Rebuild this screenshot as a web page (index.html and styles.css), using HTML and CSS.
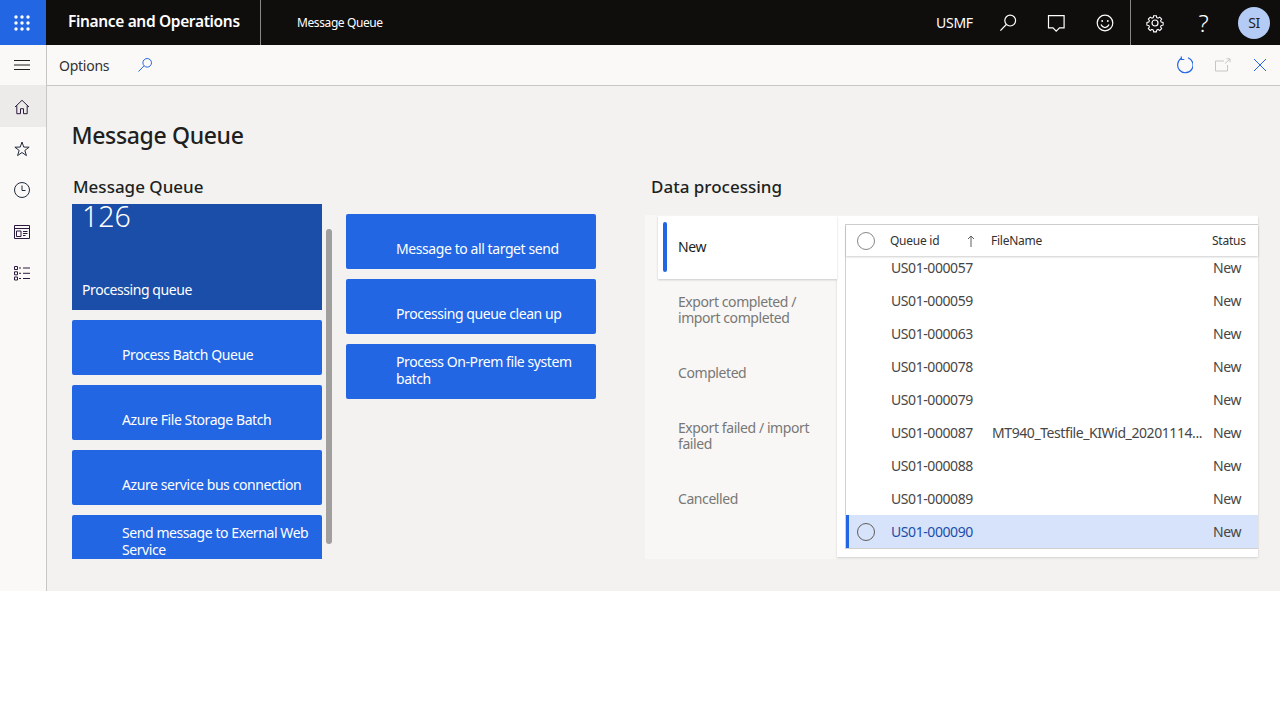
FILE: index.html
```html
<!DOCTYPE html>
<html lang="en">
<head>
<meta charset="utf-8">
<title>Message Queue</title>
<link rel="stylesheet" href="styles.css">
</head>
<body>
<div class="app">
  <header class="topbar">
    <div class="waffle">
      <svg width="16" height="16" viewBox="0 0 16 16" fill="#fff"><circle cx="2" cy="2" r="1.7"/><circle cx="8" cy="2" r="1.7"/><circle cx="14" cy="2" r="1.7"/><circle cx="2" cy="8" r="1.7"/><circle cx="8" cy="8" r="1.7"/><circle cx="14" cy="8" r="1.7"/><circle cx="2" cy="14" r="1.7"/><circle cx="8" cy="14" r="1.7"/><circle cx="14" cy="14" r="1.7"/></svg>
    </div>
    <div class="brand">Finance and Operations</div>
    <div class="crumb">Message Queue</div>
    <div class="company">USMF</div>
    <div class="topicon">
      <svg width="20" height="20" viewBox="-1 0 20 20" fill="none" stroke="#fff" stroke-width="1.2"><circle cx="12.2" cy="7.6" r="5.4"/><path d="M8.3 11.5 2.4 17.6"/></svg>
    </div>
    <div class="topicon">
      <svg width="20" height="20" viewBox="0 0 20 20" fill="none" stroke="#fff" stroke-width="1.2"><path d="M2.5 2.6h15.6v12.3h-4.6l-3.3 3.2-3.2-3.2H2.5z"/></svg>
    </div>
    <div class="topicon">
      <svg width="20" height="20" viewBox="0 0 20 20" fill="none" stroke="#fff" stroke-width="1.2"><circle cx="10" cy="10" r="7.8"/><circle cx="7.2" cy="8" r=".9" fill="#fff" stroke="none"/><circle cx="12.8" cy="8" r=".9" fill="#fff" stroke="none"/><path d="M6 11.6c1 2 2.4 3 4 3s3-1 4-3"/></svg>
    </div>
    <div class="topicon divided">
      <svg width="20" height="20" viewBox="0 0 20 20" fill="none" stroke="#fff" stroke-width="1.2"><path d="M8.5 1.9h3l.4 2.1 1.5.7 1.9-1.2 2.1 2.1-1.2 1.9.7 1.5 2.1.4v3l-2.1.4-.7 1.5 1.2 1.9-2.1 2.1-1.9-1.2-1.5.7-.4 2.1h-3l-.4-2.1-1.5-.7-1.9 1.2-2.1-2.1 1.2-1.9-.7-1.5-2.1-.4v-3l2.1-.4.7-1.5-1.2-1.9 2.1-2.1 1.900 1.200 1.500-.7z" transform="translate(1 1) scale(.9)"/><circle cx="10" cy="10" r="3"/></svg>
    </div>
    <div class="topicon help">?</div>
    <div class="avatar">SI</div>
  </header>
  <div class="shell">
    <nav class="sidebar">
      <div class="navitem">
        <svg width="16" height="12" viewBox="0 0 16 12" fill="none" stroke="#201f1e" stroke-width="1"><path d="M0 1.5h16M0 6h16M0 10.5h16"/></svg>
      </div>
      <div class="navitem current">
        <svg width="16" height="16" viewBox="0 0 16 16" fill="none" stroke="#2b1a3d" stroke-width="1"><path d="M1 8 8 1.3 15 8M2.8 6.500v8.200h3.700v-5h3v5h3.700V6.500"/></svg>
      </div>
      <div class="navitem">
        <svg width="16" height="16" viewBox="0 0 16 16" fill="none" stroke="#1f2a3d" stroke-width="1"><path d="M8 1 9.760 6.070 15.130 6.180 10.850 9.430 12.410 14.570 8 11.500 3.590 14.570 5.150 9.430 .87 6.180 6.240 6.070z"/></svg>
      </div>
      <div class="navitem">
        <svg width="16" height="16" viewBox="0 0 16 16" fill="none" stroke="#1f2a3d" stroke-width="1"><circle cx="8" cy="8" r="7.500"/><path d="M8 3.500v5h3.500"/></svg>
      </div>
      <div class="navitem">
        <svg width="16" height="14" viewBox="0 0 16 14" fill="none" stroke="#2b1a3d" stroke-width="1"><path d="M.5.500h15v13H.5zM.5 3.500h15M2.500 6h4.500v5.500H2.500zM9 6.500h4.500M9 8.500h4.500M9 10.500h2.500"/></svg>
      </div>
      <div class="navitem">
        <svg width="16" height="15" viewBox="0 0 16 15" fill="none" stroke="#2b1a3d" stroke-width="1"><path d="M.5.500h3v3h-3zM.5 5.800h3v3h-3zM.5 11h3v3h-3zM5 2h2M9 2h7M5 7.300h2M9 7.300h7M5 12.500h2M9 12.500h7"/></svg>
      </div>
    </nav>
    <main class="main">
      <div class="toolbar">
        <span class="options">Options</span>
        <svg class="optsearch" width="16" height="16" viewBox="0 0 16 16" fill="none" stroke="#2266e3" stroke-width="1"><circle cx="10.200" cy="5.800" r="4.300"/><path d="M7 8.900 1.500 14.500"/></svg>
        <div class="toolright">
          <svg class="toolicon" width="18" height="18" viewBox="-1 0 18 18" fill="none" stroke="#2266e3" stroke-width="1.200"><path d="M5.600 2.300A7.700 7.700 0 1 0 12 1.800"/><path d="M5.300.5v3h3"/></svg>
          <svg class="toolicon" width="16" height="14" viewBox="0 0 16 14" fill="none" stroke="#c8c6c4" stroke-width="1"><path d="M9 3H.5v10h12V7M10 5.500 15 1M11.500.800H15v3.500"/></svg>
          <svg class="toolicon" width="14" height="14" viewBox="0 0 14 14" fill="none" stroke="#2266e3" stroke-width="1"><path d="m1 1 12 12M13 1 1 13"/></svg>
        </div>
      </div>
      <div class="content">
        <h1 class="title">Message Queue</h1>
        <div class="sections">
          <section class="queue">
            <h2 class="heading heading-queue">Message Queue</h2>
            <div class="tiles">
              <div class="tilecol clipped">
                <div class="bigtile">
                  <div class="count">126</div>
                  <div class="biglabel">Processing queue</div>
                </div>
                <div class="tile">Process Batch Queue</div>
                <div class="tile">Azure File Storage Batch</div>
                <div class="tile">Azure service bus connection</div>
                <div class="tile">Send message to Exernal Web Service</div>
              </div>
              <div class="scrollbar"></div>
              <div class="tilecol offset">
                <div class="tile">Message to all target send</div>
                <div class="tile">Processing queue clean up</div>
                <div class="tile">Process On-Prem file system batch</div>
              </div>
            </div>
          </section>
          <section class="processing">
            <h2 class="heading heading-data">Data processing</h2>
            <div class="panel">
              <div class="tabs">
                <div class="tab active">New</div>
                <div class="tab">Export completed / import completed</div>
                <div class="tab">Completed</div>
                <div class="tab">Export failed / import failed</div>
                <div class="tab">Cancelled</div>
              </div>
              <div class="card">
                <div class="grid">
                  <div class="row head">
                    <span class="radiocell"><i class="radio"></i></span>
                    <span class="idhead">Queue id
                      <svg width="8" height="12" viewBox="0 0 8 12" fill="none" stroke="#605e5c" stroke-width="1"><path d="M4 12V1M1 4l3-3 3 3"/></svg>
                    </span>
                    <span>FileName</span>
                    <span>Status</span>
                  </div>
                  <div class="rows">
                    <div class="rowlist">
                      <div class="row"><span></span><span>US01-000057</span><span></span><span>New</span></div>
                      <div class="row"><span></span><span>US01-000059</span><span></span><span>New</span></div>
                      <div class="row"><span></span><span>US01-000063</span><span></span><span>New</span></div>
                      <div class="row"><span></span><span>US01-000078</span><span></span><span>New</span></div>
                      <div class="row"><span></span><span>US01-000079</span><span></span><span>New</span></div>
                      <div class="row"><span></span><span>US01-000087</span><span>MT940_Testfile_KIWid_20201114...</span><span>New</span></div>
                      <div class="row"><span></span><span>US01-000088</span><span></span><span>New</span></div>
                      <div class="row"><span></span><span>US01-000089</span><span></span><span>New</span></div>
                      <div class="row selected"><span class="radiocell"><i class="radio dark"></i></span><span class="link">US01-000090</span><span></span><span>New</span></div>
                    </div>
                  </div>
                </div>
              </div>
            </div>
          </section>
        </div>
      </div>
    </main>
  </div>
</div>
</body>
</html>
```
FILE: styles.css
```css
* { box-sizing: border-box; }
html, body { margin: 0; padding: 0; background: #fff; }
body { font-family: "Noto Sans", "Open Sans", "Liberation Sans", sans-serif; font-size: 14px; color: #201f1e; letter-spacing: -0.42px; }
.app { height: 591px; display: flex; flex-direction: column; }
.topbar { height: 45px; flex: none; background: #0f0e0d; color: #fff; display: flex; align-items: center; }
.waffle { width: 46px; height: 45px; background: #2266e3; display: flex; align-items: center; justify-content: center; padding-right: 2px; }
.brand { width: 215px; height: 45px; padding-left: 22px; font-size: 15.5px; font-weight: 600; line-height: 43px; border-right: 1px solid #8a8886; letter-spacing: -0.35px; }
.crumb { padding-left: 36px; font-size: 12px; flex: 1; letter-spacing: -0.4px; }
.company { font-size: 14px; width: 46px; letter-spacing: -0.25px; }
.topicon { width: 49px; height: 45px; display: flex; align-items: center; justify-content: center; }
.topicon.divided { border-left: 1px solid #8a8886; margin-left: 1px; }
.help { font-size: 24px; font-weight: 300; }
.avatar { width: 32px; height: 32px; border-radius: 50%; background: #b4ccf5; color: #201f1e; font-size: 14px; display: flex; align-items: center; justify-content: center; margin: 0 10px 0 10px; }
.shell { flex: 1; display: flex; min-height: 0; }
.sidebar { width: 47px; flex: none; background: #faf9f8; border-right: 1px solid #c8c6c4; }
.navitem { height: 41.7px; padding: 2px 2px 0 0; display: flex; align-items: center; justify-content: center; }
.navitem:first-child { height: 40px; padding-top: 0; }
.navitem.current { background: #edebe9; }
.main { flex: 1; min-width: 0; display: flex; flex-direction: column; background: #f3f2f1; }
.toolbar { height: 41px; flex: none; background: #faf9f8; border-bottom: 1px solid #c8c6c4; display: flex; align-items: center; padding-left: 12px; }
.options { font-size: 14px; color: #323130; letter-spacing: -0.25px; }
.optsearch { margin-left: 28px; }
.toolright { margin-left: auto; display: flex; align-items: center; gap: 22px; padding-right: 13px; }
.content { flex: 1; padding: 0 22px 0 25px; min-height: 0; }
.title { margin: 33px 0 0 -0.5px; font-size: 23px; font-weight: 500; line-height: 32px; color: #201f1e; letter-spacing: -0.35px; }
.sections { display: flex; margin-top: 24px; }
.queue { width: 573px; flex: none; }
.processing { flex: 1; min-width: 0; }
.heading { margin: 0; font-size: 17px; font-weight: 500; line-height: 24px; color: #201f1e; height: 24px; letter-spacing: 0; }
.heading-queue { padding-left: 1px; }
.heading-data { padding-left: 6px; }
.tiles { display: flex; height: 355px; margin-top: 5px; }
.tilecol { width: 250px; display: flex; flex-direction: column; gap: 10px; flex: none; }
.clipped { height: 355px; overflow: hidden; }
.offset { padding-top: 10px; margin-left: 14px; }
.scrollbar { width: 6px; height: 315px; margin: 25px 0 0 4px; background: #a19f9d; border-radius: 3px; flex: none; }
.bigtile { height: 106px; flex: none; background: #1b4ea9; color: #fff; padding: 0 10px; display: flex; flex-direction: column; justify-content: space-between; }
.count { font-size: 28.5px; line-height: 24px; font-weight: 300; letter-spacing: 0; }
.biglabel { font-size: 14px; line-height: 17px; padding-bottom: 12px; }
.tile { height: 55px; flex: none; background: #2266e3; color: #fff; border-radius: 2px; padding: 0 10px 12px 50px; display: flex; align-items: flex-end; font-size: 14px; line-height: 17px; }
.panel { display: flex; height: 344px; margin-top: 16px; background: #f8f7f5; }
.tabs { width: 192px; flex: none; padding: 1px 0 0 13px; }
.tab { height: 62.8px; padding: 0 20px; display: flex; align-items: center; color: #797775; font-size: 14px; line-height: 16px; }
.tab.active { background: #fff; color: #201f1e; position: relative; box-shadow: 0 1px 2px rgba(0,0,0,.18); }
.tab.active::before { content: ""; position: absolute; left: 5px; top: 6px; width: 4px; height: 50px; background: #2266e3; border-radius: 2px; }
.card { flex: 1; min-width: 0; background: #fff; margin: 1px 0 2px; padding: 8px 0 8px 8px; box-shadow: 0 1px 2px rgba(0,0,0,.18); }
.grid { border-top: 1px solid #d2d0ce; border-left: 1px solid #d2d0ce; border-bottom: 1px solid #d2d0ce; height: 325px; display: flex; flex-direction: column; }
.row { display: grid; grid-template-columns: 45px 101px 221px 1fr; height: 33px; align-items: center; color: #484644; }
.row > span { white-space: nowrap; }
.head { height: 31px; flex: none; font-size: 12px; color: #323130; box-shadow: 0 1px 2px rgba(0,0,0,.2); position: relative; background: #fff; letter-spacing: -0.25px; }
.head > span { margin-left: -1px; }
.head > .radiocell { margin-left: 0; }
.radiocell { display: flex; padding-left: 11px; }
.radio { display: block; width: 18px; height: 18px; border: 1px solid #8a8886; border-radius: 50%; }
.radio.dark { border-color: #605e5c; }
.idhead { display: flex; align-items: center; justify-content: space-between; padding-right: 17px; }
.rows { flex: 1; min-height: 0; overflow: hidden; }
.rowlist { margin-top: -5px; }
.selected { background: #d6e3fa; box-shadow: inset 3px 0 0 #2266e3; }
.row .link { color: #1b4ea9; }
```
